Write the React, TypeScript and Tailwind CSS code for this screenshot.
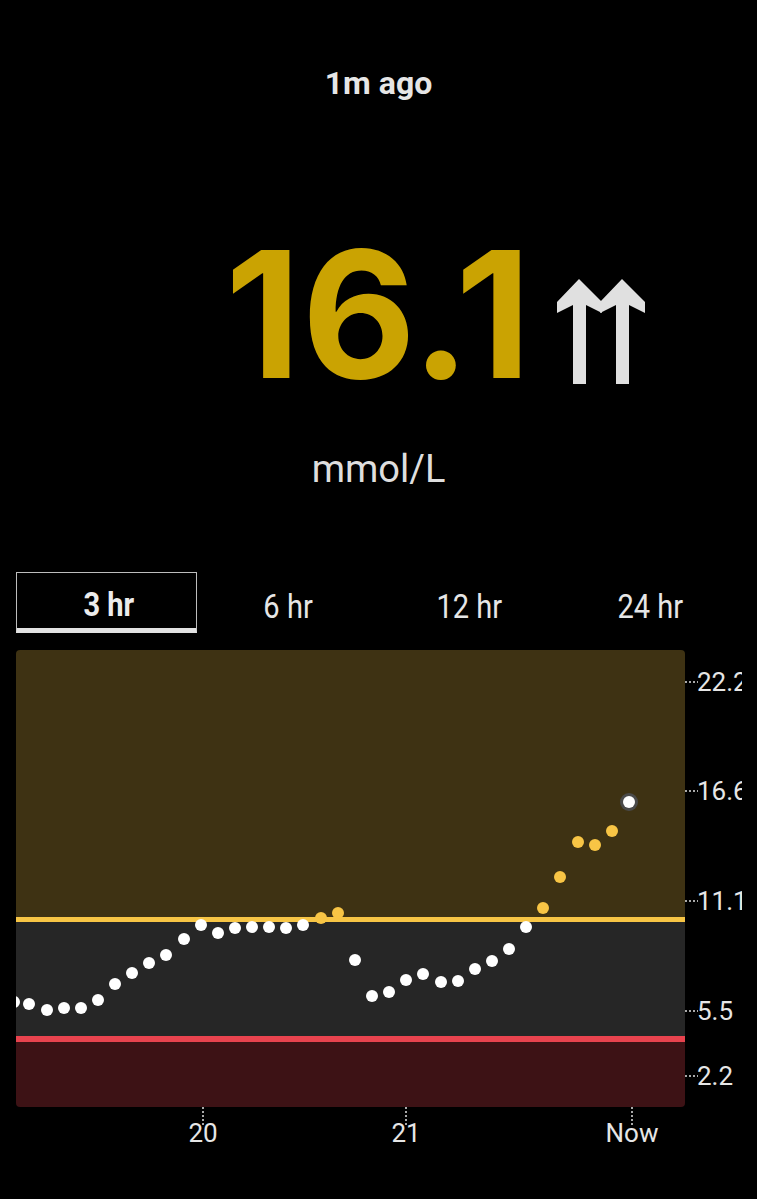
import React from 'react';

const dots: { x: number; y: number; c: 'w' | 'y' }[] = [
  { x: 14, y: 1002, c: 'w' },
  { x: 29, y: 1004, c: 'w' },
  { x: 47, y: 1010, c: 'w' },
  { x: 64, y: 1008, c: 'w' },
  { x: 81, y: 1008, c: 'w' },
  { x: 98, y: 1000, c: 'w' },
  { x: 115, y: 984, c: 'w' },
  { x: 132, y: 973, c: 'w' },
  { x: 149, y: 963, c: 'w' },
  { x: 166, y: 955, c: 'w' },
  { x: 184, y: 939, c: 'w' },
  { x: 201, y: 925, c: 'w' },
  { x: 218, y: 933, c: 'w' },
  { x: 235, y: 928, c: 'w' },
  { x: 252, y: 927, c: 'w' },
  { x: 269, y: 927, c: 'w' },
  { x: 286, y: 928, c: 'w' },
  { x: 303, y: 925, c: 'w' },
  { x: 321, y: 918, c: 'y' },
  { x: 338, y: 913, c: 'y' },
  { x: 355, y: 960, c: 'w' },
  { x: 372, y: 996, c: 'w' },
  { x: 389, y: 992, c: 'w' },
  { x: 406, y: 980, c: 'w' },
  { x: 423, y: 974, c: 'w' },
  { x: 441, y: 982, c: 'w' },
  { x: 458, y: 981, c: 'w' },
  { x: 475, y: 969, c: 'w' },
  { x: 492, y: 961, c: 'w' },
  { x: 509, y: 949, c: 'w' },
  { x: 526, y: 927, c: 'w' },
  { x: 543, y: 908, c: 'y' },
  { x: 560, y: 877, c: 'y' },
  { x: 578, y: 842, c: 'y' },
  { x: 595, y: 845, c: 'y' },
  { x: 612, y: 831, c: 'y' },
];

const yLabels = [
  { v: '22.2', y: 682 },
  { v: '16.6', y: 791 },
  { v: '11.1', y: 901 },
  { v: '5.5', y: 1011 },
  { v: '2.2', y: 1076 },
];

const xLabels = [
  { v: '20', x: 203 },
  { v: '21', x: 406 },
  { v: 'Now', x: 632 },
];

const Arrows = () => (
  <svg width="88" height="105" viewBox="0 0 88 105" className="shrink-0">
    <polygon points="22,0 0,23 0,34 16,26 16,105 29,105 29,26 45,34 45,23" fill="#e0e0e0" />
    <polygon points="65,0 43,23 43,34 59,26 59,105 72,105 72,26 88,34 88,23" fill="#e0e0e0" />
  </svg>
);

const Chart = () => {
  const top = 650;
  return (
    <svg width="757" height="510" viewBox="0 0 757 510" className="block">
      <defs>
        <clipPath id="plot">
          <rect x="16" y="0" width="669" height="457" rx="4" />
        </clipPath>
        <clipPath id="axis">
          <rect x="0" y="0" width="742" height="510" />
        </clipPath>
      </defs>
      <g clipPath="url(#plot)">
        <rect x="16" y="0" width="669" height="267" fill="#3e3213" />
        <rect x="16" y="267" width="669" height="5" fill="#f7c545" />
        <rect x="16" y="272" width="669" height="114" fill="#262626" />
        <rect x="16" y="386" width="669" height="6" fill="#e8434e" />
        <rect x="16" y="392" width="669" height="65" fill="#3d1215" />
        {dots.map((d, i) => (
          <circle key={i} cx={d.x} cy={d.y - top} r="6" fill={d.c === 'w' ? '#ffffff' : '#f8c545'} />
        ))}
        <circle cx="629" cy={802 - top} r="9" fill="#4a4a4a" />
        <circle cx="629" cy={802 - top} r="6" fill="#ffffff" />
      </g>
      <g clipPath="url(#axis)">
        {yLabels.map((l) => (
          <g key={l.v}>
            <line x1="685" x2="698" y1={l.y - top} y2={l.y - top} stroke="#e0e0e0" strokeWidth="1.5" strokeDasharray="2 2" />
            <text x="697" y={l.y - top + 9} fill="#e6e6e6" fontSize="26" fontFamily="Roboto, sans-serif">
              {l.v}
            </text>
          </g>
        ))}
      </g>
      {xLabels.map((l) => (
        <g key={l.v}>
          <text
            x={l.x}
            y={1133 - top + 9}
            fill="#e6e6e6"
            fontSize="26"
            fontFamily="Roboto, sans-serif"
            textAnchor="middle"
          >
            {l.v}
          </text>
          <line x1={l.x} x2={l.x} y1="457" y2="475" stroke="#e0e0e0" strokeWidth="1.5" strokeDasharray="2 2" />
        </g>
      ))}
    </svg>
  );
};

const tabs = ['3 hr', '6 hr', '12 hr', '24 hr'];

export default function App() {
  return (
    <div className="w-[757px] h-[1199px] bg-black overflow-hidden font-['Roboto',sans-serif] text-[#e6e6e6]">
      <div className="pt-[63px] text-center text-[32px] font-bold leading-[40px]">1m ago</div>

      <div className="mt-[113px] flex justify-center items-end h-[180px]">
        <div className="w-[113px] shrink-0" />
        <div className="font-['Inter',sans-serif] font-bold text-[176px] leading-none tracking-[0.005em] text-[#caa302] translate-y-[6px]">
          16.1
        </div>
        <div className="ml-[25px] mb-[12px]">
          <Arrows />
        </div>
      </div>

      <div className="mt-[51px] text-center text-[38px] leading-[44px] text-[#dedede]">mmol/L</div>

      <div className="mt-[81px] mx-4 grid grid-cols-4 h-[61px]">
        {tabs.map((t, i) => (
          <div
            key={t}
            className={
              i === 0
                ? 'flex items-center justify-center border border-[#bdbdbd] border-b-[5px] border-b-[#e2e2e2]'
                : 'flex items-center justify-center'
            }
          >
            <span
              className={
                i === 0
                  ? 'inline-block scale-x-[0.88] text-[33px] font-bold text-[#ececec] translate-y-[4px] translate-x-[2px]'
                  : 'inline-block scale-x-[0.88] text-[33px] text-[#e6e6e6] translate-y-[4px]'
              }
            >
              {t}
            </span>
          </div>
        ))}
      </div>

      <div className="mt-[17px]">
        <Chart />
      </div>
    </div>
  );
}
